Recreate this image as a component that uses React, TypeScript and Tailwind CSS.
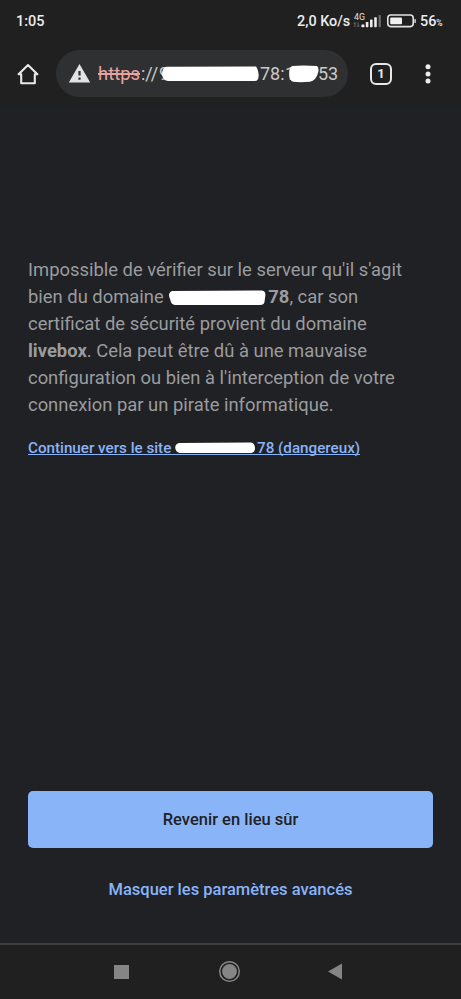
import React from "react";

const StatusBar = () => {
  return (
    <div className="flex h-[42px] items-center pl-4 pt-px text-[#ececec]">
      <span className="w-[281px] text-[14.5px] font-medium">1:05</span>
      <div className="flex items-center">
        <span className="w-[54px] whitespace-nowrap text-[14.4px] font-medium">2,0 Ko/s</span>
        <svg className="ml-[2px]" width="31" height="18" viewBox="0 0 31 18">
          <text x="1" y="7.6" fontSize="8.8" fill="#e4e4e4">
            4G
          </text>
          <path d="M2 10.5v4.5M0.8 12L2 10.5M5 10.5v4.5M6.2 13.5L5 15" stroke="#777" strokeWidth="0.9" fill="none" />
          <rect x="8.4" y="12.4" width="3" height="2.8" rx="0.6" fill="#ececec" />
          <rect x="12.8" y="10" width="2.6" height="5.2" rx="0.6" fill="#ececec" />
          <rect x="17" y="7.6" width="2.6" height="7.6" rx="0.6" fill="#ececec" />
          <rect x="21.2" y="5.2" width="2.6" height="10" rx="0.6" fill="#ececec" />
          <rect x="25.6" y="3" width="2.2" height="12.2" rx="0.6" fill="#6c6c6c" />
        </svg>
        <svg className="mb-px ml-[3px]" width="30" height="14" viewBox="0 0 30 14">
          <rect x="0.8" y="1" width="25.4" height="11.6" rx="3" fill="none" stroke="#e4e4e4" strokeWidth="1.6" />
          <rect x="3.2" y="3.4" width="11.8" height="6.8" rx="1" fill="#f0f0f0" />
          <rect x="27.4" y="5" width="1.4" height="4" rx="0.6" fill="#e4e4e4" />
        </svg>
        <span className="ml-[3px] text-[14.4px] font-medium">56</span>
        <span className="pt-1 text-[8.5px] font-medium">%</span>
      </div>
    </div>
  );
};

const Toolbar = () => {
  return (
    <div className="flex h-[64px] items-start pt-2">
      <svg className="ml-[17px] mt-[13px]" width="22" height="22" viewBox="0 0 22 22">
        <path
          d="M1.6 11.2L11 2l9.4 9.2H17.8V20.2H4.2V11.2z"
          fill="none"
          stroke="#e8e8e8"
          strokeWidth="2.1"
          strokeLinejoin="round"
        />
      </svg>
      <div className="ml-[17px] flex h-[47px] w-[292px] items-center rounded-full bg-[#2f3032] pl-3">
        <svg width="23" height="20" viewBox="0 0 23 20">
          <path d="M11.5 0L22.2 18.4H0.8z" fill="#e2e3e5" />
          <path d="M11.5 7v4.4M11.5 13.4v2.4" stroke="#2f3032" strokeWidth="2.2" />
        </svg>
        <div className="ml-[7px] flex items-center whitespace-nowrap pt-px text-[18px] leading-6 text-[#c9cacc]">
          <span className="w-[43px] text-[18.4px] text-[#e8a3a0] line-through decoration-[1.5px]">https</span>
          <span className="w-[18px]">://</span>
          <span className="w-[10px]">9</span>
          <svg className="relative -ml-[7px]" width="97" height="16" viewBox="0 0 96 16" preserveAspectRatio="none">
            <path d="M4 0.8L93 0.6Q94.5 2 95.6 8Q96 14.8 92 15H6Q1 14.5 0 9Q0 2 4 0.8z" fill="#fff" />
          </svg>
          <span className="ml-px w-[25px]">78:</span>
          <span className="w-[10px]">1</span>
          <svg className="relative -ml-[6px]" width="30" height="18" viewBox="0 0 30 18">
            <path d="M3 1Q14 0 28 1Q30.5 3 29 8Q27 15.5 21 16.8Q11 17.6 4 16.8Q0 15 0.2 9Q0 3 3 1z" fill="#fff" />
          </svg>
          <span className="-ml-px">53</span>
        </div>
      </div>
      <div className="ml-[22px] mt-[13px] flex h-[22px] w-[22px] items-center justify-center rounded-[6px] border-2 border-[#e8e8e8] text-[13px] font-bold text-[#e8e8e8]">
        1
      </div>
      <svg className="ml-[33px] mt-3.5" width="6" height="20" viewBox="0 0 6 20">
        <circle cx="3" cy="2.8" r="2.5" fill="#ececec" />
        <circle cx="3" cy="10" r="2.5" fill="#ececec" />
        <circle cx="3" cy="17" r="2.5" fill="#ececec" />
      </svg>
    </div>
  );
};

const Warning = () => {
  return (
    <div className="pl-7 pt-[151px]">
      <p className="whitespace-nowrap text-[18.4px] leading-[26.9px] text-[#9a9c9f]">
        Impossible de vérifier sur le serveur qu'il s'agit
        <br />
        bien du domaine{" "}
        <svg className="inline-block align-[-3px]" width="98" height="16" viewBox="0 0 98 16">
          <path d="M4 1L94 0.5Q97.5 1 97.4 5L96.5 12Q96 15 92 15H7Q3 14.5 2.4 10Q-1 3 4 1z" fill="#fff" />
        </svg>
        <b className="ml-[2px]">78</b>, car son
        <br />
        certificat de sécurité provient du domaine
        <br />
        <b>livebox</b>. Cela peut être dû à une mauvaise
        <br />
        configuration ou bien à l'interception de votre
        <br />
        connexion par un pirate informatique.
      </p>
      <a
        href="#"
        className="mt-[23px] block h-[14px] w-fit whitespace-nowrap border-b border-[#8ab4f8] text-[15.2px] font-medium leading-[14px] text-[#8ab4f8]"
      >
        Continuer vers le site{" "}
        <svg className="inline-block align-[-1px]" width="80" height="12" viewBox="0 0 80 12">
          <path d="M4 1L76 0.6Q79.5 1 80 6Q80 10.5 76 11H5Q1 10.5 0.2 6Q0 2 4 1z" fill="#fff" />
        </svg>
        <span className="ml-0.5">78 (dangereux)</span>
      </a>
    </div>
  );
};

const NavBar = () => {
  return (
    <div className="flex h-[56px] items-center border-t-2 border-[#3c3d3f] bg-[#202020] pb-px">
      <div className="ml-[114px] h-3.5 w-[15px] bg-[#858585]" />
      <svg className="ml-[89px]" width="23" height="23" viewBox="0 0 23 23">
        <circle cx="11.5" cy="11.5" r="9.8" fill="none" stroke="#858585" strokeWidth="1.5" />
        <circle cx="11.5" cy="11.5" r="7.4" fill="#858585" />
      </svg>
      <svg className="ml-[87px]" width="15" height="17" viewBox="0 0 15 17">
        <path d="M0 8.5L14 0.5v16z" fill="#858585" />
      </svg>
    </div>
  );
};

const App = () => {
  return (
    <div className="flex h-[999px] w-[461px] flex-col overflow-hidden bg-[#202124] font-['Roboto',sans-serif]">
      <header className="bg-[#202020]">
        <StatusBar />
        <Toolbar />
      </header>
      <main className="flex flex-1 flex-col justify-between">
        <Warning />
        <div className="flex flex-col items-center px-7 pb-[39px]">
          <button className="h-[57px] w-full rounded-[5px] bg-[#8ab4f8] pt-px text-[16.5px] font-medium text-[#202124]">
            Revenir en lieu sûr
          </button>
          <button className="mt-[27px] h-[29px] pt-0.5 text-[16.5px] font-medium text-[#8ab4f8]">
            Masquer les paramètres avancés
          </button>
        </div>
      </main>
      <NavBar />
    </div>
  );
};

export default App;
